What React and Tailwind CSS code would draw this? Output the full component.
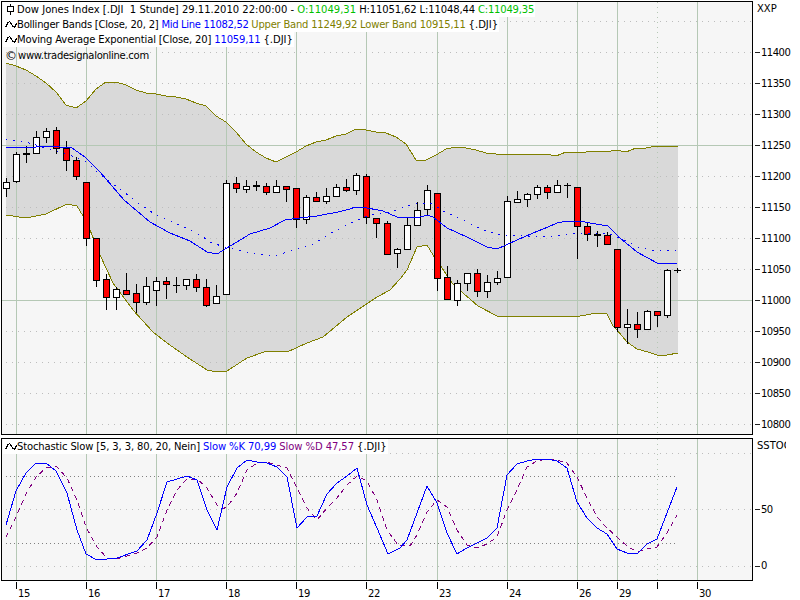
const pts = (a) => a.map((p) => p.join(",")).join(" ");

const upper = [[6,63],[16,66],[26,70],[36,76],[46,83],[56,92],[66,105],[76,108],[86,101],[96,89],[106,82],[116,82],[126,85],[136,90],[146,93],[156,94],[166,96],[176,97],[186,99],[196,103],[206,106],[216,116],[226,122],[236,132],[246,144],[256,152],[266,158],[276,162],[286,157],[296,152],[306,146],[316,142],[326,140],[336,136],[346,134],[356,129],[366,130],[376,132],[386,133],[396,137],[406,144],[416,160],[426,160],[436,155],[446,149],[456,147],[466,148],[476,150],[486,153],[496,154],[506,155],[516,154],[526,154],[546,154],[556,156],[566,152],[586,152],[596,151],[606,152],[616,150],[626,152],[636,148],[646,148],[656,146],[678,146]];
const lower = [[6,215],[26,218],[46,214],[67,204],[77,206],[83,216],[90,230],[100,255],[113,283],[133,310],[153,332],[167,343],[187,357],[207,370],[217,372],[227,371],[247,358],[267,351],[287,352],[307,343],[323,337],[347,317],[377,297],[390,290],[400,279],[407,270],[417,247],[427,245],[433,255],[442,268],[452,283],[463,293],[478,306],[497,316],[553,316],[563,317],[580,316],[597,313],[607,314],[613,326],[617,330],[627,342],[637,349],[648,352],[657,355],[667,355],[678,353]];
const mid = [[6,147],[28,148],[45,146],[60,147],[72,148],[85,157],[100,172],[124,200],[150,222],[170,233],[190,241],[207,252],[217,254],[227,248],[250,234],[270,228],[285,220],[300,218],[317,216],[338,212],[350,209],[355,207],[362,207],[383,211],[397,217],[417,218],[427,215],[433,217],[447,228],[467,237],[487,247],[497,249],[517,240],[533,233],[548,227],[557,223],[567,221],[580,221],[590,223],[608,226],[620,238],[637,252],[657,263],[672,263],[677,264]];
const ema = [[6,139],[20,141],[33,144],[47,149],[72,156],[88,163],[100,175],[117,187],[128,195],[138,203],[153,213],[172,222],[187,228],[203,237],[212,243],[225,247],[242,251],[258,254],[273,256],[288,252],[313,244],[333,232],[353,222],[370,215],[390,212],[417,203],[430,203],[447,213],[467,222],[483,230],[500,235],[527,236],[555,236],[573,234],[607,233],[620,238],[640,248],[657,251],[677,250]];
const stochK = [[6,525],[16,491],[26,473],[36,463],[46,463],[56,471],[67,493],[77,530],[86,554],[97,560],[117,558],[137,551],[147,540],[157,513],[167,482],[187,476],[197,480],[207,510],[217,530],[227,487],[237,468],[247,460],[257,462],[267,463],[277,467],[287,477],[297,528],[307,517],[317,516],[327,494],[337,483],[347,476],[357,468],[367,505],[377,528],[388,554],[400,548],[407,540],[417,513],[427,486],[437,503],[447,533],[457,554],[467,548],[487,538],[497,528],[507,475],[517,464],[527,461],[537,459],[547,459],[557,461],[567,468],[577,502],[587,518],[597,528],[607,534],[617,549],[627,553],[637,554],[647,544],[657,539],[667,513],[677,487]];
const stochD = [[6,537],[16,517],[26,494],[36,477],[46,468],[56,466],[67,478],[77,500],[86,527],[97,547],[107,558],[117,559],[137,553],[147,548],[157,537],[167,510],[177,490],[187,479],[197,479],[207,488],[217,505],[222,509],[227,507],[237,493],[247,470],[257,463],[267,462],[277,465],[287,468],[297,488],[307,508],[317,520],[327,508],[337,498],[347,485],[357,476],[367,481],[377,500],[387,530],[398,545],[410,546],[417,535],[427,512],[437,500],[447,507],[457,530],[467,545],[477,548],[487,544],[497,537],[507,510],[517,490],[527,467],[537,461],[547,459],[557,460],[567,463],[577,477],[587,498],[597,517],[607,528],[617,537],[627,546],[637,552],[647,549],[657,547],[667,533],[677,515]];

const candles = [
  [6,178,197,182,188,"w"],[16,152,183,154,181,"w"],[26,146,163,153,155,"d"],[36,131,154,137,153,"w"],[46,128,143,131,137,"w"],
  [56,127,154,130,148,"r"],[66,141,171,148,160,"r"],[76,157,180,160,176,"r"],[86,182,246,182,238,"r"],[96,238,287,238,280,"r"],
  [106,274,310,279,297,"r"],[116,287,310,289,297,"w"],[126,273,295,290,294,"r"],[136,284,313,293,302,"r"],[146,277,305,286,302,"w"],
  [156,277,306,281,290,"w"],[166,277,299,281,284,"r"],[176,277,293,285,285,"d"],[186,279,290,279,285,"w"],[196,274,292,279,287,"r"],
  [206,279,307,287,305,"r"],[216,285,303,296,303,"w"],[226,180,294,183,294,"w"],[236,177,193,183,188,"r"],[246,180,193,186,189,"w"],
  [256,181,191,185,187,"d"],[266,183,195,186,192,"r"],[276,180,192,186,192,"w"],[286,186,202,186,189,"r"],[296,188,228,188,219,"r"],
  [306,195,224,197,219,"w"],[316,192,202,197,201,"r"],[326,188,204,196,201,"w"],[336,184,197,187,196,"w"],[346,179,192,187,190,"r"],
  [356,173,195,175,190,"w"],[366,174,224,176,217,"r"],[376,218,238,218,223,"r"],[387,221,254,223,254,"r"],[397,248,268,249,253,"w"],
  [407,217,249,225,249,"w"],[417,202,225,210,225,"w"],[427,185,215,190,209,"w"],[437,193,291,193,278,"r"],[447,266,299,277,299,"r"],
  [457,280,306,283,300,"w"],[467,273,291,273,283,"w"],[477,269,297,273,291,"r"],[487,275,298,282,291,"w"],[497,271,285,278,282,"w"],
  [507,196,277,201,277,"w"],[517,191,203,199,202,"w"],[527,193,207,194,199,"w"],[537,185,199,187,194,"w"],[547,185,199,187,192,"r"],
  [557,180,193,185,192,"w"],[567,183,198,185,186,"d"],[577,187,259,187,226,"r"],[587,222,241,226,234,"r"],[597,231,247,234,236,"d"],
  [607,232,245,235,244,"r"],[617,249,332,249,327,"r"],[627,309,344,324,327,"w"],[637,312,338,324,329,"r"],[647,310,330,311,329,"w"],
  [657,311,327,311,315,"r"],[667,269,318,270,315,"w"],
];

const GRID = "#b5c8b5";
const DOT = "#bdbdbd";
const majors = [16,86,156,226,296,366,437,507,577,617,697];
const yDots = [21,52,83,114,176,207,238,269,331,362,393,424];

function Candle({ c }) {
  const [x, hi, lo, top, bot, k] = c;
  return (
    <g shapeRendering="crispEdges">
      <rect x={x} y={hi} width="1" height={lo - hi} fill="#000" />
      {k === "d" ? (
        <rect x={x - 3} y={top} width="7" height={Math.max(bot - top, 1)} fill="#000" />
      ) : (
        <rect x={x - 2.5} y={top + 0.5} width="6" height={bot - top} fill={k === "r" ? "#ff0000" : "#ffffff"} stroke="#000" strokeWidth="1" />
      )}
    </g>
  );
}

function MainChart() {
  return (
    <svg className="block" width="750" height="432" viewBox="2 2 750 432">
      <polygon points={pts(upper) + " " + pts([...lower].reverse())} fill="#d9d9d9" />
      <g shapeRendering="crispEdges">
        {yDots.map((y) => (
          <line key={y} x1="6" x2="752" y1={y + 0.5} y2={y + 0.5} stroke={DOT} strokeDasharray="1 5" />
        ))}
        {majors.map((x) => (
          <line key={x} x1={x + 0.5} x2={x + 0.5} y1="2" y2="434" stroke={GRID} />
        ))}
        <line x1="657.5" x2="657.5" y1="2" y2="434" stroke={GRID} strokeDasharray="1 4" />
        <line x1="2" x2="752" y1="145.5" y2="145.5" stroke={GRID} />
        <line x1="2" x2="752" y1="300.5" y2="300.5" stroke={GRID} />
      </g>
      <g fill="none" shapeRendering="crispEdges">
        <polyline points={pts(upper)} stroke="#808000" />
        <polyline points={pts(lower)} stroke="#808000" />
      </g>
      {candles.map((c) => (
        <Candle key={c[0]} c={c} />
      ))}
      <g shapeRendering="crispEdges">
        <rect x="677" y="268" width="1" height="5" fill="#000" />
        <rect x="674" y="270" width="7" height="1" fill="#000" />
      </g>
      <g fill="none" shapeRendering="crispEdges">
        <polyline points={pts(mid)} stroke="#0000ff" />
        <polyline points={pts(ema)} stroke="#0000ff" strokeDasharray="1.5 6" />
      </g>
    </svg>
  );
}

function StochChart() {
  return (
    <svg className="block" width="750" height="141" viewBox="2 439 750 141">
      <g shapeRendering="crispEdges">
        {[453, 509, 566].map((y) => (
          <line key={y} x1="6" x2="752" y1={y + 0.5} y2={y + 0.5} stroke={DOT} strokeDasharray="1 5" />
        ))}
        {[476, 543].map((y) => (
          <line key={y} x1="6" x2="676" y1={y + 0.5} y2={y + 0.5} stroke="#808080" strokeDasharray="1 3" />
        ))}
        {majors.map((x) => (
          <line key={x} x1={x + 0.5} x2={x + 0.5} y1="439" y2="580" stroke={GRID} />
        ))}
        <line x1="657.5" x2="657.5" y1="439" y2="580" stroke={GRID} strokeDasharray="1 4" />
      </g>
      <g fill="none" shapeRendering="crispEdges">
        <polyline points={pts(stochD)} stroke="#800080" strokeDasharray="5 4" />
        <polyline points={pts(stochK)} stroke="#0000ff" />
      </g>
    </svg>
  );
}

function Wave() {
  return (
    <svg className="shrink-0" width="12" height="9" viewBox="0 0 12 9" fill="none" shapeRendering="crispEdges">
      <polyline points="0.5,7.5 3,2.5 4.5,1.5 6,3.5 8,6.5 9.5,7.5 11.5,3.5" stroke="#000" />
    </svg>
  );
}

function CandleIcon() {
  return (
    <svg className="mr-[3px] ml-[2px] shrink-0" width="7" height="11" viewBox="0 0 7 11" fill="none" shapeRendering="crispEdges">
      <rect x="3" y="0" width="1" height="11" fill="#000" />
      <rect x="0.5" y="2.5" width="6" height="5" fill="#fff" stroke="#000" />
    </svg>
  );
}

function LegendRow({ children, bg = true, h = "h-[15px]" }) {
  return (
    <div className={`flex items-center w-fit pl-[2px] pr-[1px] whitespace-pre ${h} ${bg ? "bg-white" : ""}`}>
      {children}
    </div>
  );
}

function PriceTick({ v }) {
  return (
    <div className="flex items-center h-[31px] pl-[2px]">
      <span className="block w-[5px] h-[1px] bg-[#222] mr-[1px]" />
      <span className="tracking-[-0.5px]">{v}</span>
    </div>
  );
}

const dayTicks = [
  ["15", "w-[70px]"], ["16", "w-[70px]"], ["17", "w-[70px]"], ["18", "w-[70px]"], ["19", "w-[70px]"],
  ["22", "w-[71px]"], ["23", "w-[70px]"], ["24", "w-[70px]"], ["26", "w-[40px]"], ["29", "w-[40px]"], ["", "w-[40px]"], ["30", "w-[40px]"],
];

export default function App() {
  return (
    <div className="w-[800px] h-[600px] overflow-hidden bg-white pt-[1px] pl-[1px] text-black text-[10px] leading-[16px] font-['DejaVu_Sans',Verdana,sans-serif]">
      <div className="flex h-[434px]">
        <div className="relative w-[752px] h-[434px] shrink-0 border border-black bg-[#f6f6f6] overflow-hidden">
          <MainChart />
          <div className="absolute left-[1px] top-0">
            <LegendRow>
              <CandleIcon />
              <span>Dow Jones Index [.DJI  1 Stunde] 29.11.2010 22:00:00 - </span>
              <span className="text-[#00c000]">O:11049,31 </span>
              <span className="tracking-[-0.13px]">H:11051,62 L:11048,44 </span>
              <span className="text-[#00c000] tracking-[-0.2px]">C:11049,35</span>
            </LegendRow>
            <LegendRow>
              <Wave />
              <span className="tracking-[-0.23px]">Bollinger Bands [Close, 20, 2] </span>
              <span className="text-[#0000ff] tracking-[-0.33px]">Mid Line 11082,52 </span>
              <span className="text-[#808000] tracking-[-0.22px]">Upper Band 11249,92 Lower Band 10915,11 </span>
              <span>{"{.DJI}"}</span>
            </LegendRow>
            <LegendRow>
              <Wave />
              <span className="tracking-[-0.15px]">Moving Average Exponential [Close, 20] </span>
              <span className="text-[#0000ff] tracking-[-0.2px]">11059,11 </span>
              <span>{"{.DJI}"}</span>
            </LegendRow>
            <LegendRow bg={false} h="h-[17px]">
              <span className="mr-[1px] text-[12px]">©</span>
              <span className="tracking-[-0.29px]">www.tradesignalonline.com</span>
            </LegendRow>
          </div>
        </div>
        <div className="w-[47px] shrink-0">
          <div className="h-[36px] pl-[4px]">XXP</div>
          {[11400,11350,11300,11250,11200,11150,11100,11050,11000,10950,10900,10850,10800].map((v) => (
            <PriceTick key={v} v={v} />
          ))}
        </div>
      </div>

      <div className="flex mt-[3px] h-[143px]">
        <div className="relative w-[752px] h-[143px] shrink-0 border border-black bg-[#f6f6f6] overflow-hidden">
          <StochChart />
          <div className="absolute left-[1px] top-0">
            <LegendRow h="h-[15px]">
              <Wave />
              <span className="tracking-[-0.14px]">Stochastic Slow [5, 3, 3, 80, 20, Nein] </span>
              <span className="text-[#0000ff] tracking-[-0.1px]">Slow %K 70,99 </span>
              <span className="text-[#800080] tracking-[-0.07px]">Slow %D 47,57 </span>
              <span>{"{.DJI}"}</span>
            </LegendRow>
          </div>
        </div>
        <div className="w-[47px] shrink-0">
          <div className="h-[43px] pl-[4px] w-[33px] overflow-hidden">SSTOC</div>
          <div className="flex items-center h-[57px] pl-[2px]">
            <span className="block w-[5px] h-[1px] bg-[#222] mr-[1px]" />
            <span className="tracking-[-0.5px]">50</span>
          </div>
          <div className="flex items-start h-[43px] pt-[20px] pl-[2px]">
            <span className="block w-[5px] h-[1px] bg-[#222] mr-[1px] mt-[8px]" />
            <span>0</span>
          </div>
        </div>
      </div>

      <div className="flex pl-[15px]">
        {dayTicks.map(([d, w], i) => (
          <div key={i} className={`flex shrink-0 ${w} h-[18px]`}>
            <span className="block w-[1px] h-[7px] bg-black mt-[1px] mr-[1px]" />
            <span className="mt-[5px] tracking-[-0.3px]">{d}</span>
          </div>
        ))}
      </div>
    </div>
  );
}
